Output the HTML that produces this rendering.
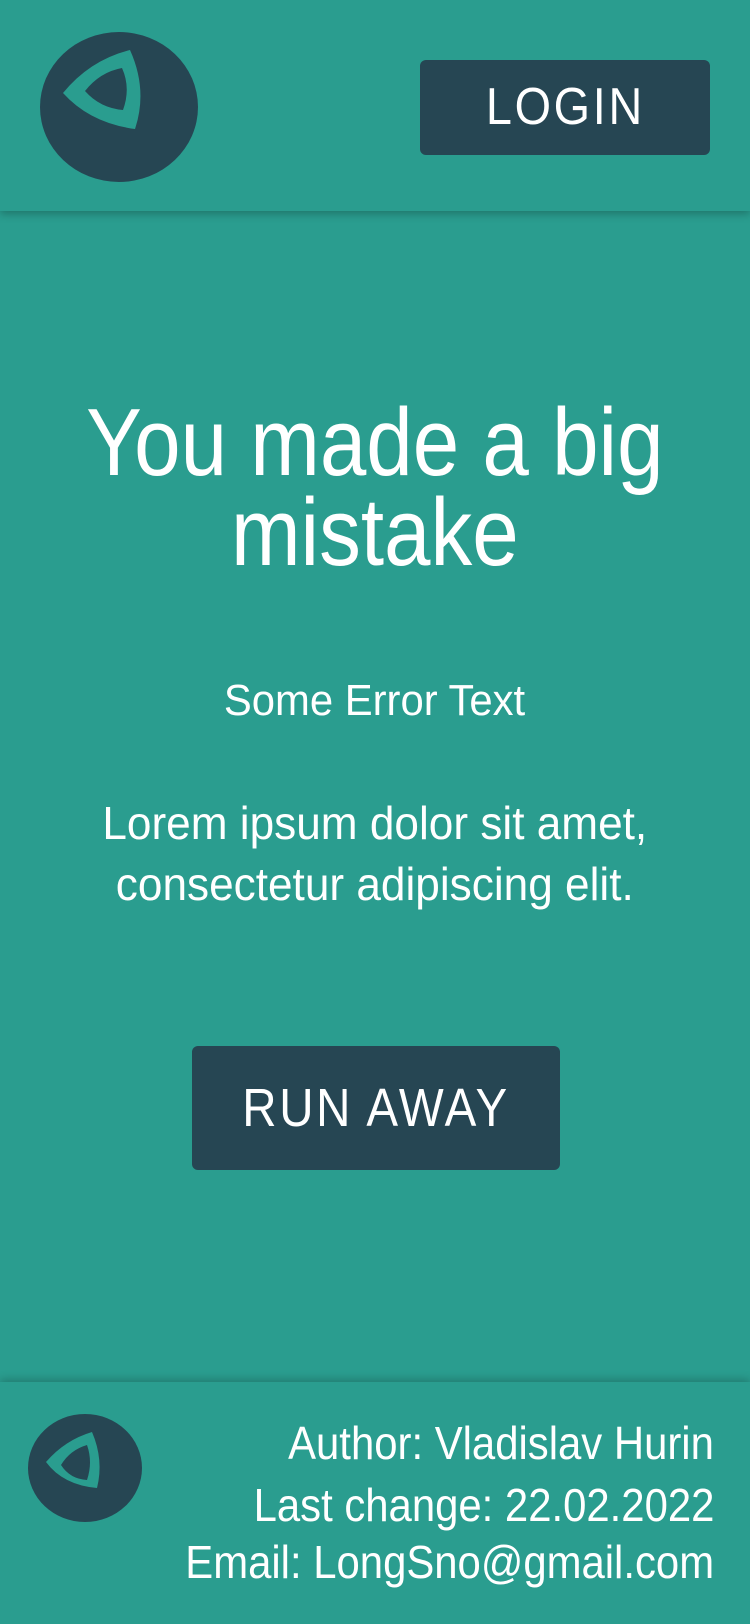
<!DOCTYPE html>
<html><head><meta charset="utf-8"><style>
html,body{margin:0;padding:0}
body{width:750px;height:1624px;background:#2a9d8f;position:relative;overflow:hidden;font-family:"Liberation Sans",sans-serif;color:#fff}
.hdr{position:absolute;left:0;top:0;width:750px;height:211px;background:#2a9d8f;box-shadow:0 3px 8px rgba(0,0,0,.25)}
.ftr{position:absolute;left:0;top:1382px;width:750px;height:242px;background:#2a9d8f;box-shadow:0 -3px 8px rgba(0,0,0,.2)}
.btn{position:absolute;background:#264653;border-radius:6px;color:#fff;text-align:center;white-space:nowrap}
.c{position:absolute;left:0;width:750px;text-align:center;white-space:nowrap}
.r{position:absolute;right:36px;text-align:right;white-space:nowrap;font-size:46px;transform:scaleX(.91);transform-origin:right center}
span.s{display:inline-block}
</style></head><body>
<div class="hdr">
<svg style="position:absolute;left:0;top:0" width="220" height="211">
<ellipse cx="119" cy="107" rx="79" ry="75" fill="#264653"/>
<path d="M130 50 Q 90 60 63 93 Q 90 123 135 129 Q 148 90 130 50 Z M122 68 Q 100 72 85 91 Q 100 108 123 110 Q 131 88 122 68 Z" fill="#2a9d8f" fill-rule="evenodd"/>
</svg>
<div class="btn" style="left:420px;top:60px;width:290px;height:95px;line-height:95px;font-size:52px"><span class="s" style="transform:scaleX(.9);letter-spacing:3px">LOGIN</span></div>
</div>
<div class="c" style="top:398px;font-size:96px;line-height:90px"><span class="s" style="transform:scaleX(.87)">You made a big<br>mistake</span></div>
<div class="c" style="top:675px;font-size:44px;line-height:52px"><span class="s" style="transform:scaleX(.95)">Some Error Text</span></div>
<div class="c" style="top:793px;font-size:46px;line-height:61px"><span class="s" style="transform:scaleX(.96)">Lorem ipsum dolor sit amet,<br>consectetur adipiscing elit.</span></div>
<div class="btn" style="left:192px;top:1046px;width:368px;height:124px;line-height:124px;font-size:54px"><span class="s" style="transform:scaleX(.88);letter-spacing:3px">RUN AWAY</span></div>
<div class="ftr">
<svg style="position:absolute;left:0;top:0" width="160" height="200">
<ellipse cx="85" cy="86" rx="57" ry="54" fill="#264653"/>
<path d="M92 50 Q 65 58 46 80 Q 63 103 97 106 Q 104 78 92 50 Z M87 63 Q 70 68 61 83 Q 70 97 87 98 Q 93 80 87 63 Z" fill="#2a9d8f" fill-rule="evenodd"/>
</svg>
<div class="r" style="top:34px">Author: Vladislav Hurin</div>
<div class="r" style="top:96px">Last change: 22.02.2022</div>
<div class="r" style="top:153px">Email: LongSno@gmail.com</div>
</div>
</body></html>
